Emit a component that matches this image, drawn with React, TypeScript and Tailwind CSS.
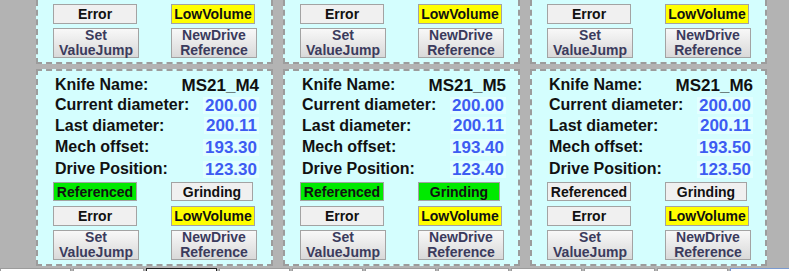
import React from "react";

type Knife = {
  name: string;
  current: string;
  last: string;
  mech: string;
  drive: string;
  referenced: boolean;
  grinding: boolean;
};

const bottomRow: Knife[] = [
  { name: "MS21_M4", current: "200.00", last: "200.11", mech: "193.30", drive: "123.30", referenced: true, grinding: false },
  { name: "MS21_M5", current: "200.00", last: "200.11", mech: "193.40", drive: "123.40", referenced: true, grinding: true },
  { name: "MS21_M6", current: "200.00", last: "200.11", mech: "193.50", drive: "123.50", referenced: false, grinding: false },
];

function Lamp({ on, color, children }: { on: boolean; color: "green" | "yellow"; children: React.ReactNode }) {
  const bg = on ? (color === "green" ? "bg-[#00ea00]" : "bg-[#ffff00]") : "bg-[#f0f0f0]";
  return (
    <div className={`h-full flex items-center justify-center border border-[#a3a3a3] text-[14px] font-bold leading-none text-[#111] ${bg}`}>
      {children}
    </div>
  );
}

function PushBtn({ top, bottom }: { top: string; bottom: string }) {
  return (
    <div className="h-[30px] w-[86px] flex flex-col items-center justify-center border border-[#a3a3a3] bg-linear-to-b from-[#f8f8f8] to-[#d9d9d9] text-[14px] font-bold leading-[15px] text-[#3b3b5d]">
      <span>{top}</span>
      <span>{bottom}</span>
    </div>
  );
}

function Row({ label, value, h, blue = true }: { label: string; value: string; h: string; blue?: boolean }) {
  return (
    <div className={`flex items-center justify-between ${h}`}>
      <span className="text-[#111]">{label}</span>
      <span className={`text-[17px] ${blue ? "text-[#3d5cf2] px-[2px] bg-[#e2ffff]" : "text-[#111]"}`}>{value}</span>
    </div>
  );
}

// error / low volume / push buttons, shared by full and scrolled panels
function Buttons() {
  return (
    <div className="pl-[15px] grid grid-cols-[84px_84px] gap-x-[34px]">
      <div className="h-[20px]">
        <Lamp on={false} color="yellow">Error</Lamp>
      </div>
      <div className="h-[20px]">
        <Lamp on={true} color="yellow">LowVolume</Lamp>
      </div>
      <div className="mt-[4px]">
        <PushBtn top="Set" bottom="ValueJump" />
      </div>
      <div className="mt-[4px]">
        <PushBtn top="NewDrive" bottom="Reference" />
      </div>
    </div>
  );
}

function Panel({ k }: { k: Knife }) {
  return (
    <div className="w-[237px] h-[197px] border-2 border-dashed border-[#9c9c9c] bg-[#d4fefe] pt-[4px]">
      <div className="pl-[17px] pr-[12px] text-[16px] font-bold leading-none">
        <Row label="Knife Name:" value={k.name} h="h-[20px]" blue={false} />
        <Row label="Current diameter:" value={k.current} h="h-[20px]" />
        <Row label="Last diameter:" value={k.last} h="h-[21px]" />
        <Row label="Mech offset:" value={k.mech} h="h-[22px]" />
        <Row label="Drive Position:" value={k.drive} h="h-[22px]" />
      </div>
      <div className="mt-[2px] pl-[15px] grid grid-cols-[84px_84px] gap-x-[34px]">
        <div className="h-[19px]">
          <Lamp on={k.referenced} color="green">Referenced</Lamp>
        </div>
        <div className="h-[19px] w-[82px]">
          <Lamp on={k.grinding} color="green">Grinding</Lamp>
        </div>
      </div>
      <div className="mt-[5px]">
        <Buttons />
      </div>
    </div>
  );
}

// bottom part of the previous row, scrolled up out of view
function ScrolledPanel() {
  return (
    <div className="w-[237px] h-[64px] border-2 border-t-0 border-dashed border-[#9c9c9c] bg-[#d4fefe] pt-[4px]">
      <Buttons />
    </div>
  );
}

export default function App() {
  const tabs = Array.from({ length: 11 });
  return (
    <div className="h-screen w-full overflow-hidden bg-[#b3b3b3] font-['Liberation_Sans',Arial,sans-serif]">
      <div className="flex flex-col gap-[5px]">
        {/* //? previous row */}
        <div className="pl-[36px] flex gap-[10px]">
          <ScrolledPanel />
          <ScrolledPanel />
          <ScrolledPanel />
        </div>
        {/* //? current row */}
        <div className="pl-[36px] flex gap-[10px]">
          {bottomRow.map((k) => (
            <Panel key={k.name} k={k} />
          ))}
        </div>
        {/* //? next row tabs */}
        <div className="-mt-[3px] flex gap-[2px]">
          {tabs.map((_, i) => (
            <div
              key={i}
              className={`shrink-0 w-[71px] h-[12px] bg-white border ${
                i === 2 ? "border-[#222]" : i === 10 ? "border-[#7a9ad0]" : "border-[#9c9c9c]"
              }`}
            />
          ))}
        </div>
      </div>
    </div>
  );
}
